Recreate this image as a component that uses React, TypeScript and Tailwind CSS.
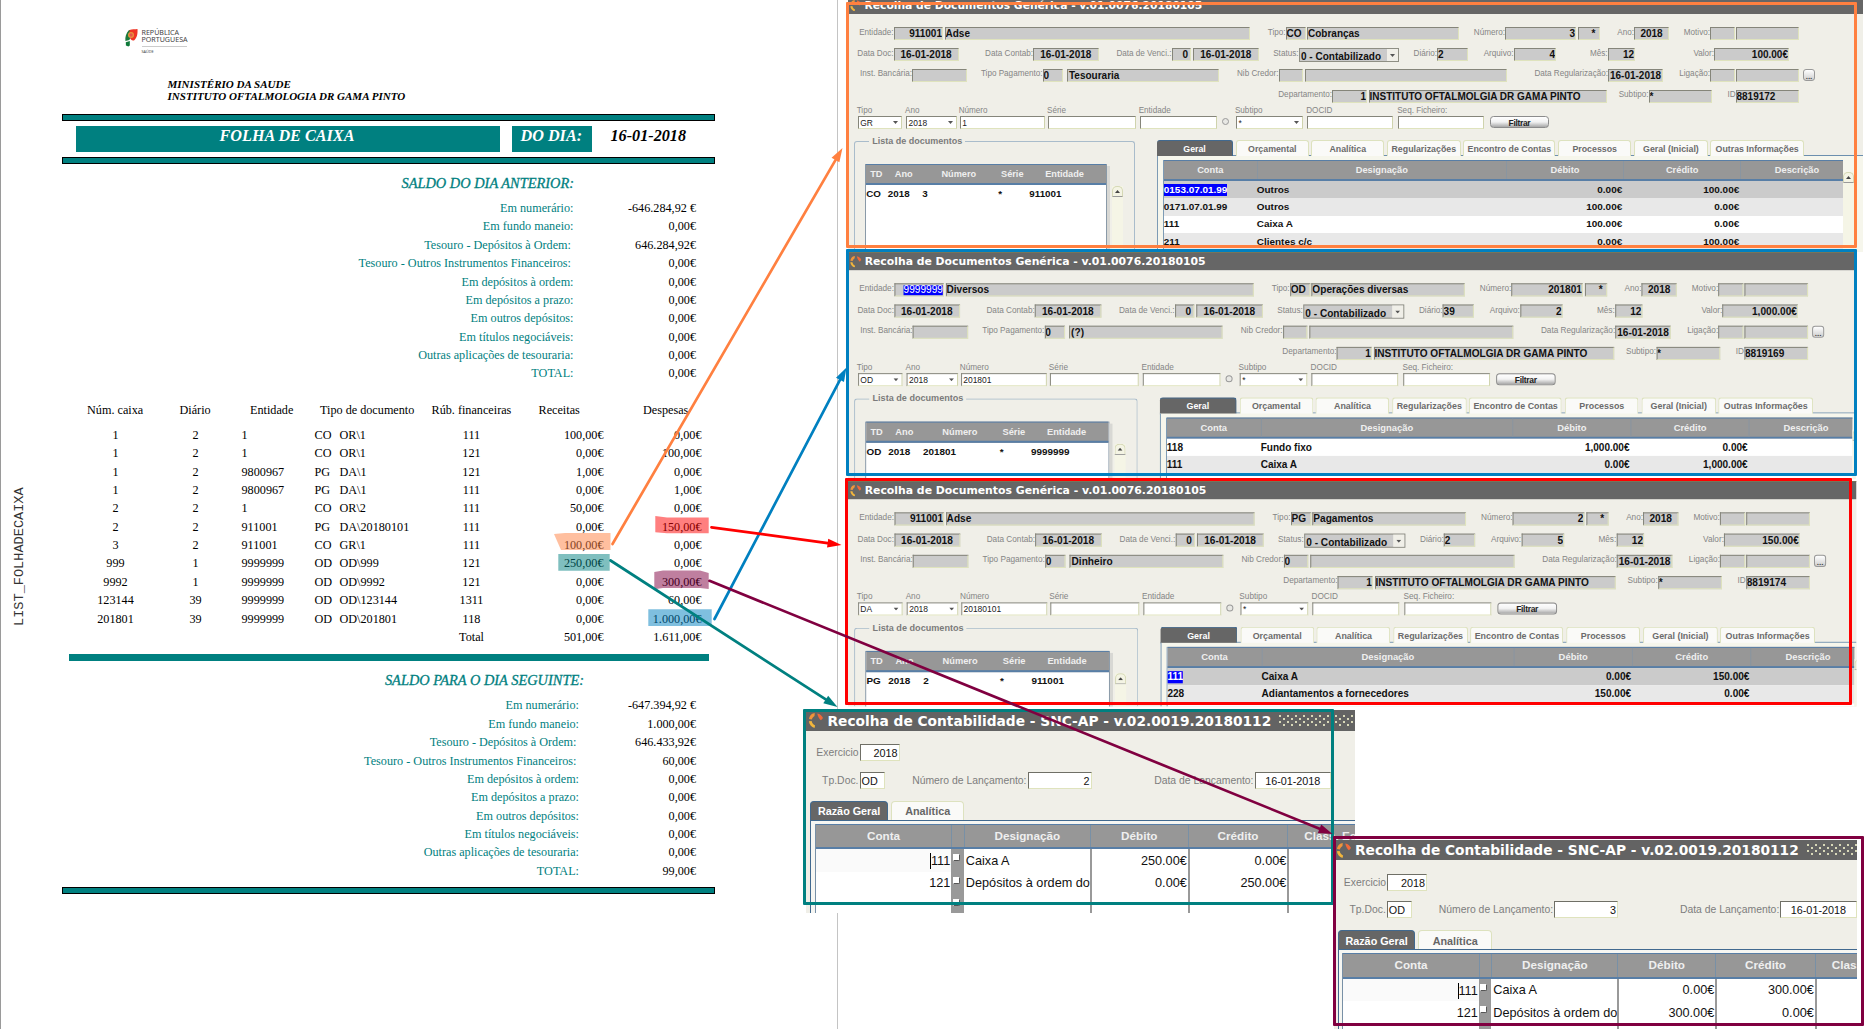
import type { ReactNode } from "react";

/* ---------- Cash sheet (left page) ---------- */

type Balance = [label: string, value: string];

const previousBalance: Balance[] = [
  ["Em numerário:", "-646.284,92 €"],
  ["Em fundo maneio:", "0,00€"],
  ["Tesouro - Depósitos à Ordem:", "646.284,92€"],
  ["Tesouro - Outros Instrumentos Financeiros:", "0,00€"],
  ["Em depósitos à ordem:", "0,00€"],
  ["Em depósitos a prazo:", "0,00€"],
  ["Em outros depósitos:", "0,00€"],
  ["Em títulos negociáveis:", "0,00€"],
  ["Outras aplicações de tesouraria:", "0,00€"],
  ["TOTAL:", "0,00€"],
];

const nextBalance: Balance[] = [
  ["Em numerário:", "-647.394,92 €"],
  ["Em fundo maneio:", "1.000,00€"],
  ["Tesouro - Depósitos à Ordem:", "646.433,92€"],
  ["Tesouro - Outros Instrumentos Financeiros:", "60,00€"],
  ["Em depósitos à ordem:", "0,00€"],
  ["Em depósitos a prazo:", "0,00€"],
  ["Em outros depósitos:", "0,00€"],
  ["Em títulos negociáveis:", "0,00€"],
  ["Outras aplicações de tesouraria:", "0,00€"],
  ["TOTAL:", "99,00€"],
];

const movements = [
  ["1", "2", "1", "CO", "OR\\1", "111", "100,00€", "0,00€"],
  ["1", "2", "1", "CO", "OR\\1", "121", "0,00€", "100,00€"],
  ["1", "2", "9800967", "PG", "DA\\1", "121", "1,00€", "0,00€"],
  ["1", "2", "9800967", "PG", "DA\\1", "111", "0,00€", "1,00€"],
  ["2", "2", "1", "CO", "OR\\2", "111", "50,00€", "0,00€"],
  ["2", "2", "911001", "PG", "DA\\20180101", "111", "0,00€", "150,00€"],
  ["3", "2", "911001", "CO", "GR\\1", "111", "100,00€", "0,00€"],
  ["999", "1", "9999999", "OD", "OD\\999", "121", "250,00€", "0,00€"],
  ["9992", "1", "9999999", "OD", "OD\\9992", "121", "0,00€", "300,00€"],
  ["123144", "39", "9999999", "OD", "OD\\123144", "1311", "0,00€", "60,00€"],
  ["201801", "39", "9999999", "OD", "OD\\201801", "118", "0,00€", "1.000,00€"],
  ["", "", "", "", "", "Total", "501,00€", "1.611,00€"],
];

function Rule() {
  return <div className="ml-[62.5px] h-[7px] w-[652.5px] shrink-0 border border-black bg-[#008080]" />;
}

function BalanceRows({ rows, labelWidth }: { rows: Balance[]; labelWidth: string }) {
  return (
    <div className="flex flex-col text-[12.2px] leading-[18.38px]">
      {rows.map(([label, value]) => (
        <div key={label} className="flex w-[696.5px] justify-between whitespace-nowrap">
          <span
            className={`${labelWidth} text-right text-[#008080] ${label.startsWith("Tesouro") ? "pr-[2.5px]" : ""}`}
          >
            {label}
          </span>
          <span>{value}</span>
        </div>
      ))}
    </div>
  );
}

function Emblem() {
  return (
    <svg className="h-[18px] w-[13px]" viewBox="0 0 13 18">
      <path d="M4 1C1 4 0 8 .4 12l4-1c0-1.500 3-3 3-5V1z" fill="#1d7a3c" />
      <path d="M4.500 1C7 .3 10 .2 12.500 0c.3 5-.5 9-3.500 11.500C7 12 5 10.500 5 8z" fill="#ee3524" />
      <circle cx="6" cy="6" r="3" fill="#e8963c" />
      <circle cx="6" cy="6" r="1.800" fill="#e4574a" />
      <path d="M.8 13.200l4-1.200v4.500l-1.500 1L.9 16.500z" fill="#0f7a3a" />
    </svg>
  );
}

const movementGrid =
  "grid grid-cols-[80px_80px_74px_25px_98px_78px_93px_98px] whitespace-nowrap";

function CashSheet() {
  return (
    <section className="flex h-[1029px] w-[838px] border-l-[1.5px] border-r border-l-[#9a9a9a] border-r-[#c4c4c4] bg-white font-['Liberation_Serif',serif] text-black">
      <div className="h-full w-0">
        <div className="ml-[10px] mt-[486px] h-[140px] w-[18px] rotate-180 whitespace-nowrap font-['Liberation_Mono',monospace] text-[13.6px] leading-[18px] text-[#333] [writing-mode:vertical-rl]">
          LIST_FOLHADECAIXA
        </div>
      </div>
      <div className="-ml-[1.5px] flex w-[836px] shrink-0 flex-col">
        <div className="ml-[125px] mt-[29px] flex h-[49px]">
          <Emblem />
          <div className="ml-1 font-['Noto_Sans',sans-serif] text-[7.1px] leading-[7px] text-[#444]">
            <div>REPÚBLICA</div>
            <div className="w-[45.5px] border-b border-[#ccc] pb-[3px]">PORTUGUESA</div>
            <div className="pt-0.5 text-[3.8px] leading-[5px]">SAÚDE</div>
          </div>
        </div>
        <div className="ml-[168px] h-[36px] text-[11.05px] font-bold italic leading-[12px]">
          <div>MINISTÉRIO DA SAUDE</div>
          <div>INSTITUTO OFTALMOLOGIA DR GAMA PINTO</div>
        </div>
        <Rule />
        <div className="mb-[5px] ml-[76px] mt-[5px] flex h-[26px] gap-3 text-[16.2px] font-bold italic leading-[20px]">
          <div className="w-[424px] bg-[#008080] pl-[144px] text-white">FOLHA DE CAIXA</div>
          <div className="w-[80px] bg-[#008080] pl-[9px] text-white">DO DIA:</div>
          <div className="pl-[7px]">16-01-2018</div>
        </div>
        <Rule />
        <h2 className="mb-[7px] mt-[10px] w-[574.5px] text-right text-[14.4px] italic leading-[18px] text-[#008080] [-webkit-text-stroke:0.3px]">
          SALDO DO DIA ANTERIOR:
        </h2>
        <BalanceRows rows={previousBalance} labelWidth="w-[574px]" />
        <div className="mt-[18px] flex h-[25px] whitespace-nowrap text-[12.2px] leading-[18px]">
          <span className="ml-[87.5px] w-[92.5px]">Núm. caixa</span>
          <span className="w-[70.5px]">Diário</span>
          <span className="w-[70px]">Entidade</span>
          <span className="w-[111.5px]">Tipo de documento</span>
          <span className="w-[107px]">Rúb. financeiras</span>
          <span className="w-[104.500px]">Receitas</span>
          <span>Despesas</span>
        </div>
        <div className="ml-[76px] flex flex-col text-[12.2px] leading-[18.39px]">
          {movements.map((m, i) => (
            <div key={i} className={movementGrid}>
              <span className="text-center">{m[0]}</span>
              <span className="text-center">{m[1]}</span>
              <span className="pl-[6px]">{m[2]}</span>
              <span className="pl-[5px]">{m[3]}</span>
              <span className="pl-[5px]">{m[4]}</span>
              <span className="text-center">{m[5]}</span>
              <span className="text-right">{m[6]}</span>
              <span className="text-right">{m[7]}</span>
            </div>
          ))}
        </div>
        <div className="ml-[69px] mt-[7.5px] h-[7px] w-[640px] shrink-0 bg-[#008080]" />
        <h2 className="mb-[7px] mt-[10.5px] w-[584.5px] text-right text-[14.4px] italic leading-[18px] text-[#008080] [-webkit-text-stroke:0.3px]">
          SALDO PARA O DIA SEGUINTE:
        </h2>
        <BalanceRows rows={nextBalance} labelWidth="w-[579.5px]" />
        <div className="h-[6.5px]" />
        <Rule />
      </div>
    </section>
  );
}

/* ---------- Application windows ---------- */

function AppIcon({ className }: { className: string }) {
  return (
    <svg className={className} viewBox="0 0 12 12">
      <path d="M5 0L3 .5C1.500 1.500.6 3 .4 4.800L2.600 5.200C3 4 3.800 3 4.800 2.400z" fill="#f0953a" />
      <path d="M7 0.300c2.200.4 3.800 1.800 4.600 3.700L10 5.800C9 5 7.600 3.500 7 .3z" fill="#ee6a3a" />
      <path d="M.3 6.500l2.200-.2C2.800 8 4 9.300 5.300 10L4.800 12C2.300 11 .6 9 .3 6.500z" fill="#f2b63c" />
    </svg>
  );
}

function Label({ children }: { children?: ReactNode }) {
  return (
    <span className="flex justify-end whitespace-nowrap pt-[0.5px] text-[8.15px] leading-[9px] text-[#858585]">
      {children}
    </span>
  );
}

function Field({ children, align = "" }: { children?: ReactNode; align?: string }) {
  return (
    <span
      className={`flex h-[12.7px] items-center overflow-hidden whitespace-nowrap border-b border-l border-r border-t border-b-[#dfe3bd] border-l-[#85857a] border-r-[#dfe3bd] border-t-[#85857a] bg-[#cbcbcb] pt-[1.5px] text-[10px] font-bold leading-[10px] text-[#111] ${align}`}
    >
      {children}
    </span>
  );
}

const right = "justify-end";
const center = "justify-center text-[9.7px]";

function Chevron() {
  return (
    <svg className="h-[3px] w-[5px]" viewBox="0 0 5 3">
      <path d="M0 0h5L2.500 3z" fill="#555" />
    </svg>
  );
}

function Input({ label, children, select }: { label: string; children?: ReactNode; select?: boolean }) {
  return (
    <div className="flex flex-col text-[8.4px] text-[#222]">
      <span className="-ml-px h-[10px] whitespace-nowrap text-[8.15px] leading-[9px] text-[#858585]">{label}</span>
      <div className="flex h-[12.5px] items-center justify-between border border-b-[#dfe3bd] border-l-[#85857a] border-r-[#cfd3ad] border-t-[#85857a] bg-white pl-[1.5px] pr-[2.5px]">
        <span className="pt-[1px] leading-[10px]">{children}</span>
        {select && <Chevron />}
      </div>
    </div>
  );
}

function ScrollArrow() {
  return (
    <div className="flex h-[11px] w-[11px] items-center justify-center rounded-t-[5px] border border-b-[#999] border-l-[#d5d8b5] border-r-[#d5d8b5] border-t-[#d5d8b5] bg-[#f4f4e4]">
      <svg className="h-[3px] w-[5px]" viewBox="0 0 5 3">
        <path d="M0 3h5L2.500 0z" fill="#444" />
      </svg>
    </div>
  );
}

function Tab({ children }: { children: ReactNode }) {
  return (
    <div className="flex items-center justify-center whitespace-nowrap rounded-t-[3px] border-l border-r border-t border-[#dde2bf] bg-[#fafaf8] pt-[2px] text-[8.8px] font-bold text-[#6b6b6b]">
      {children}
    </div>
  );
}

interface Entry {
  conta: string;
  desig: string;
  deb: string;
  cred: string;
  tone: string;
  selected?: boolean;
}

interface DocProps {
  entity: string;
  entityName: string;
  entitySelected?: boolean;
  tipo: string;
  tipoName: string;
  numero: string;
  diario: string;
  arquivo: string;
  valor: string;
  pagamento: string;
  nib?: string;
  id: string;
  filterTipo: string;
  filterNumero: string;
  list: string[];
  entries: Entry[];
}

function DocumentWindow(p: DocProps) {
  return (
    <div className="flex h-full w-full flex-col overflow-hidden bg-[#f0efe8] font-['Liberation_Sans',sans-serif]">
      <div className="flex h-[17.5px] shrink-0 items-center border-t border-[#77755a] bg-[#666] pl-[2px]">
        <AppIcon className="h-[11.5px] w-[11.5px]" />
        <span className="ml-[3px] whitespace-nowrap pt-[2px] font-['DejaVu_Sans',sans-serif] text-[10.74px] font-bold text-white">
          Recolha de Documentos Genérica - v.01.0076.20180105
        </span>
      </div>

      <div className="mt-[13.5px] grid h-[21.3px] shrink-0 grid-cols-[45.5px_49.5px_1.5px_305.5px_35.5px_20px_1.5px_152px_46px_71px_1.5px_22px_34.5px_35px_41px_24.5px_1.5px_63px]">
        <Label>Entidade:</Label>
        <Field align={right}>
          {p.entitySelected ? (
            <span className="bg-[#0000fe] text-[10px] font-normal text-white">{p.entity}</span>
          ) : (
            p.entity
          )}
        </Field>
        <i />
        <Field>{p.entityName}</Field>
        <Label>Tipo:</Label>
        <Field>{p.tipo}</Field>
        <i />
        <Field>{p.tipoName}</Field>
        <Label>Número:</Label>
        <Field align={right}>{p.numero}</Field>
        <i />
        <Field align="justify-end pr-[3px]">*</Field>
        <Label>Ano:</Label>
        <Field align={center}>2018</Field>
        <Label>Motivo:</Label>
        <Field />
        <i />
        <Field />
      </div>

      <div className="grid h-[20.7px] shrink-0 grid-cols-[45.5px_65px_74.5px_65.5px_73px_19.5px_1.5px_66.5px_39.500px_100.5px_38px_31px_45.5px_42.5px_51.5px_27.5px_79px_75px]">
        <Label>Data Doc:</Label>
        <Field align={center}>16-01-2018</Field>
        <Label>Data Contab:</Label>
        <Field align={center}>16-01-2018</Field>
        <Label>Data de Venci.:</Label>
        <Field align="justify-end pr-[2px]">0</Field>
        <i />
        <Field align={center}>16-01-2018</Field>
        <Label>Status:</Label>
        <div className="flex h-[13.5px] items-center justify-between border border-[#8f8f84] bg-[#cbcbcb] pl-[1.500px] text-[10px] font-bold text-[#111]">
          <span className="whitespace-nowrap pt-[3px] leading-[10px]">0 - Contabilizado</span>
          <span className="flex h-full w-[11px] items-center justify-center bg-[#f0efe8]">
            <Chevron />
          </span>
        </div>
        <Label>Diário:</Label>
        <Field>{p.diario}</Field>
        <Label>Arquivo:</Label>
        <Field align={right}>{p.arquivo}</Field>
        <Label>Mês:</Label>
        <Field align={right}>12</Field>
        <Label>Valor:</Label>
        <Field align={right}>{p.valor}</Field>
      </div>

      <div className="grid h-[21px] shrink-0 grid-cols-[64px_54.5px_76px_20.500px_4px_152px_59.500px_24px_2px_202px_101.5px_55px_47px_24.5px_1.5px_63px_4px_12px]">
        <Label>Inst. Bancária:</Label>
        <Field />
        <Label>Tipo Pagamento:</Label>
        <Field>0</Field>
        <i />
        <Field align="pl-[1px]">{p.pagamento}</Field>
        <Label>Nib Credor:</Label>
        <Field>{p.nib}</Field>
        <i />
        <Field />
        <Label>Data Regularização:</Label>
        <Field align={center}>16-01-2018</Field>
        <Label>Ligação:</Label>
        <Field />
        <i />
        <Field />
        <i />
        <div className="flex h-[12.5px] items-end justify-center rounded-[3px] border border-[#999] bg-gradient-to-b from-white to-[#cfcfcf] text-[8px] font-bold leading-[7px] text-[#444]">
          ...
        </div>
      </div>

      <div className="grid h-[16.5px] shrink-0 grid-cols-[484px_35px_1.5px_238px_42px_63.5px_23.500px_63.5px]">
        <Label>Departamento:</Label>
        <Field align={right}>1</Field>
        <i />
        <Field>INSTITUTO OFTALMOLGIA DR GAMA PINTO</Field>
        <Label>Subtipo:</Label>
        <Field>*</Field>
        <Label>ID</Label>
        <Field>{p.id}</Field>
      </div>

      <div className="ml-[9.7px] grid h-[34px] shrink-0 grid-cols-[44.3px_4px_51px_2.7px_85.3px_3px_87.7px_4px_77.6px_4.7px_7.4px_6.6px_67px_4.3px_85.4px_5.6px_85.4px_6.3px_59px]">
        <Input label="Tipo" select>{p.filterTipo}</Input>
        <i />
        <Input label="Ano" select>2018</Input>
        <i />
        <Input label="Número">{p.filterNumero}</Input>
        <i />
        <Input label="Série" />
        <i />
        <Input label="Entidade" />
        <i />
        <div className="mt-[11.5px] h-[7.4px] w-[7.4px] rounded-full border border-[#999] bg-[#e8e8e4]" />
        <i />
        <Input label="Subtipo" select>*</Input>
        <i />
        <Input label="DOCID" />
        <i />
        <Input label="Seq. Ficheiro:" />
        <i />
        <div className="mt-[9.5px] flex h-[12.5px] items-center justify-center rounded-[3.5px] border border-[#8c8c8c] bg-gradient-to-b from-white via-[#f2f2f2] to-[#a8a8a8] pt-[2px] text-[8.4px] font-bold leading-[9px] tracking-[-0.3px] text-[#222]">
          Filtrar
        </div>
      </div>

      <div className="flex min-h-0 grow">
        <div className="ml-[6.3px] mt-[1px] w-[281px] shrink-0 rounded-t-[3px] border border-b-0 border-[#a9bccb]">
          <div className="-mt-[6px] ml-[14px] h-[11px] w-fit bg-[#f0efe8] px-[3px] text-[9px] font-bold leading-[11px] text-[#7b7b7b]">
            Lista de documentos
          </div>
          <div className="ml-[10px] mt-[17px] flex h-full">
            <div className="flex h-full w-[241.5px] flex-col border-l border-r border-[#8a9aa8] bg-white">
              <div className="grid h-[20.5px] shrink-0 grid-cols-[20px_35px_75px_32px_1fr] items-center border-b-2 border-t border-[#587ea6] bg-[#979797] pt-[1px] text-center text-[9.2px] font-bold text-[#efefef]">
                <span>TD</span>
                <span>Ano</span>
                <span>Número</span>
                <span>Série</span>
                <span className="pr-[5px]">Entidade</span>
              </div>
              <div className="flex h-[17px] items-center pt-[1px] text-[9.8px] font-bold text-[#111]">
                <span className="w-[21.5px]">{p.list[0]}</span>
                <span className="w-[34.5px]">{p.list[1]}</span>
                <span className="w-[76px]">{p.list[2]}</span>
                <span className="w-[31px]">*</span>
                <span>{p.list[3]}</span>
              </div>
            </div>
            <div className="mt-[2px] h-full w-[3px] bg-[#d8d8d4]" />
            <div className="ml-[2px] mt-[21.5px] h-full bg-[#f5f5e6]">
              <ScrollArrow />
            </div>
          </div>
        </div>

        <div className="ml-[21.5px] flex min-w-0 grow flex-col">
          <div className="grid h-[15.500px] shrink-0 grid-cols-[76.5px_72.600px_73px_73.7px_92px_73.400px_73.700px_93.300px] gap-x-[2.7px] border-b border-[#6c8fae]">
            <div className="flex items-center justify-center rounded-t-[3px] border-t border-r border-[#41698f] bg-[#666] pt-[2px] text-[8.8px] font-bold text-white">
              Geral
            </div>
            <Tab>Orçamental</Tab>
            <Tab>Analítica</Tab>
            <Tab>Regularizações</Tab>
            <Tab>Encontro de Contas</Tab>
            <Tab>Processos</Tab>
            <Tab>Geral (Inicial)</Tab>
            <Tab>Outras Informações</Tab>
          </div>
          <div className="flex min-h-0 grow border-l border-[#7d9bb5] bg-[#f6f6ec] pl-[5px] pt-[4.5px]">
            <div className="flex w-[680px] shrink-0 flex-col border-l border-[#7d9bb5] bg-white">
              <div className="grid h-[20.5px] shrink-0 grid-cols-[93px_249px_117.4px_117px_1fr] items-center border-b-2 border-t border-[#587ea6] bg-[#979797] text-center text-[9.3px] font-bold text-[#efefef]">
                <span className="pt-[1px]">Conta</span>
                <span className="flex h-full items-center justify-center border-l border-[#8a95a0] pt-[1px]">Designação</span>
                <span className="flex h-full items-center justify-center border-l border-[#8a95a0] pt-[1px]">Débito</span>
                <span className="flex h-full items-center justify-center border-l border-[#8a95a0] pt-[1px]">Crédito</span>
                <span className="flex h-full items-center justify-center border-l border-[#8a95a0] pl-[10px] pt-[1px]">Descrição</span>
              </div>
              {p.entries.map((e) => (
                <div
                  key={e.conta}
                  className={`grid h-[17.3px] shrink-0 grid-cols-[93px_249px_116.4px_117px] items-center whitespace-nowrap pt-[0.5px] text-[9.95px] font-bold leading-[12px] text-[#111] ${e.tone}`}
                >
                  <span>
                    {e.selected ? (
                      <span className="inline-block bg-[#0000fe] text-white">{e.conta}</span>
                    ) : (
                      e.conta
                    )}
                  </span>
                  <span>{e.desig}</span>
                  <span className="text-right">{e.deb}</span>
                  <span className="text-right">{e.cred}</span>
                </div>
              ))}
            </div>
            <div className="mt-[12px] bg-[#f5f5e6]">
              <ScrollArrow />
            </div>
          </div>
        </div>
      </div>
    </div>
  );
}

function WhiteBox({ children, className }: { children: ReactNode; className: string }) {
  return (
    <span
      className={`flex h-[17px] items-center whitespace-nowrap border border-b-[#dfe3bd] border-l-[#6f6f66] border-r-[#dfe3bd] border-t-[#6f6f66] bg-white px-px pt-[1px] text-[10.8px] text-[#111] ${className}`}
    >
      {children}
    </span>
  );
}

const ledgerCols = "grid grid-cols-[135.5px_12.500px_126px_98px_99.500px_1fr]";
const headCell = "flex h-full items-center justify-center border-l border-[#7890a6]";

function LedgerWindow({ numero, rows }: { numero: string; rows: string[][] }) {
  return (
    <div className="flex h-full w-full flex-col overflow-hidden bg-[#f0efe8] font-['Liberation_Sans',sans-serif]">
      <div className="flex h-[20.5px] shrink-0 items-center bg-[#636363] pl-[2px] pt-[1px]">
        <AppIcon className="h-[15px] w-[16px]" />
        <span className="ml-[3.5px] shrink-0 whitespace-nowrap pt-[1px] font-['DejaVu_Sans',sans-serif] text-[13.76px] font-bold text-white">
          Recolha de Contabilidade - SNC-AP - v.02.0019.20180112
        </span>
        <span className="ml-[8px] h-[12px] grow bg-[radial-gradient(circle_at_1px_1px,#d8d8b8_0.8px,transparent_1px),radial-gradient(circle_at_1px_1px,#d8d8b8_0.8px,transparent_1px)] bg-[length:8px_6px] [background-position:0_0,4px_3px]" />
      </div>
      <div className="mt-[13.5px] flex h-[27.500px] shrink-0 text-[10.4px] leading-[18px] text-[#7d7d7d]">
        <span className="w-[53.5px] pr-px text-right">Exercicio</span>
        <WhiteBox className="w-[40px] justify-end">2018</WhiteBox>
      </div>
      <div className="flex h-[29px] shrink-0 whitespace-nowrap text-[10.4px] leading-[18px] text-[#7d7d7d]">
        <span className="w-[53.5px] pr-px text-right">Tp.Doc.</span>
        <WhiteBox className="w-[25.5px]">OD</WhiteBox>
        <span className="w-[142.5px] pr-px text-right">Número de Lançamento:</span>
        <WhiteBox className="w-[64px] justify-end">{numero}</WhiteBox>
        <span className="w-[163px] pr-px text-right">Data de Lançamento:</span>
        <WhiteBox className="w-[76.500px] justify-center">16-01-2018</WhiteBox>
      </div>
      <div className="ml-[4.300px] flex h-[20px] shrink-0 gap-[3px] border-b border-[#41698f] text-[10.8px] font-bold">
        <div className="flex w-[77.700px] items-center justify-center rounded-t-[4px] border-l border-r border-t border-[#41698f] bg-[#666] pt-[2px] text-white">
          Razão Geral
        </div>
        <div className="flex w-[73.500px] items-center justify-center rounded-t-[4px] border-l border-r border-t border-[#dde2bf] bg-[#fafaf8] pt-[2px] text-[#666]">
          Analítica
        </div>
      </div>
      <div className="ml-[4.300px] flex min-h-0 grow border-l border-[#41698f] bg-[#f6f6f2] pl-[3.500px] pt-[3px]">
        <div className="flex w-full flex-col border-l border-[#7890a6] bg-white">
          <div
            className={`${ledgerCols} h-[25.500px] shrink-0 items-center border-b-2 border-t border-[#587ea6] bg-[#979797] text-[11.7px] font-bold text-[#efefef]`}
          >
            <span className="text-center">Conta</span>
            <span className={headCell} />
            <span className={headCell}>Designação</span>
            <span className={headCell}>Débito</span>
            <span className={headCell}>Crédito</span>
            <span className="flex h-full items-center whitespace-nowrap border-l border-[#7890a6] pl-[16px]">
              Class. Ec
            </span>
          </div>
          {[...rows, ["", "", "", ""]].map((r, i) => (
            <div
              key={i}
              className={`${ledgerCols} h-[22.500px] shrink-0 items-center whitespace-nowrap text-[12.7px] text-[#111]`}
            >
              <span
                className={`flex h-full items-center justify-end pr-[1px] pt-[2px] ${i === 0 ? "bg-[#fafafa]" : ""}`}
              >
                <span className={i === 0 ? "border-l border-black leading-[16px]" : ""}>{r[0]}</span>
              </span>
              <span className="h-full bg-[#999] pl-[1.500px] pt-[5px]">
                <span className="block h-[7px] w-[7px] rounded-br-[2px] border border-b-[#555] border-l-white border-r-[#555] border-t-white bg-white" />
              </span>
              <span className="flex h-full items-center overflow-hidden pl-[2px] pt-[2px]">{r[1]}</span>
              <span className="flex h-full items-center justify-end border-l-2 border-[#999] pr-[1px] pt-[2px]">{r[2]}</span>
              <span className="flex h-full items-center justify-end border-l-2 border-[#999] pr-[1px] pt-[2px]">{r[3]}</span>
              <span className="h-full border-l-2 border-[#999]" />
            </div>
          ))}
        </div>
      </div>
    </div>
  );
}

/* ---------- Annotations ---------- */

interface ArrowProps {
  from: [number, number];
  to: [number, number];
  color: string;
}

function Arrow({ from, to, color }: ArrowProps) {
  const dx = to[0] - from[0];
  const dy = to[1] - from[1];
  const len = Math.hypot(dx, dy);
  const ux = dx / len;
  const uy = dy / len;
  const bx = to[0] - ux * 14;
  const by = to[1] - uy * 14;
  return (
    <g fill={color} stroke={color}>
      <line x1={from[0]} y1={from[1]} x2={bx} y2={by} strokeWidth={2.7} strokeLinecap="round" />
      <polygon
        stroke="none"
        points={`${to[0]},${to[1]} ${bx - uy * 4.500},${by + ux * 4.500} ${bx + uy * 4.500},${by - ux * 4.500}`}
      />
    </g>
  );
}

const gray = "bg-[#cbcbcb]";
const light = "bg-[#e8e8e8]";

export default function App() {
  return (
    <main className="relative h-[1029px] w-[1867px] overflow-hidden bg-white">
      <CashSheet />

      <div className="absolute left-[848px] top-[-4px] h-[255.500px] w-[1015px]">
        <DocumentWindow
          entity="911001"
          entityName="Adse"
          tipo="CO"
          tipoName="Cobranças"
          numero="3"
          diario="2"
          arquivo="4"
          valor="100.00€"
          pagamento="Tesouraria"
          id="8819172"
          filterTipo="GR"
          filterNumero="1"
          list={["CO", "2018", "3", "911001"]}
          entries={[
            { conta: "0153.07.01.99", desig: "Outros", deb: "0.00€", cred: "100.00€", tone: gray, selected: true },
            { conta: "0171.07.01.99", desig: "Outros", deb: "100.00€", cred: "0.00€", tone: light },
            { conta: "111", desig: "Caixa A", deb: "100.00€", cred: "0.00€", tone: "bg-white" },
            { conta: "211", desig: "Clientes c/c", deb: "0.00€", cred: "100.00€", tone: light },
          ]}
        />
      </div>

      <div className="absolute left-[848px] top-[251.500px] h-[224.500px] w-[998px] origin-top-left scale-[1.0095]">
        <DocumentWindow
          entity="9999999"
          entityName="Diversos"
          entitySelected
          tipo="OD"
          tipoName="Operações diversas"
          numero="201801"
          diario="39"
          arquivo="2"
          valor="1,000.00€"
          pagamento="(?)"
          id="8819169"
          filterTipo="OD"
          filterNumero="201801"
          list={["OD", "2018", "201801", "9999999"]}
          entries={[
            { conta: "118", desig: "Fundo fixo", deb: "1,000.00€", cred: "0.00€", tone: "bg-white" },
            { conta: "111", desig: "Caixa A", deb: "0.00€", cred: "1,000.00€", tone: light },
          ]}
        />
      </div>

      <div className="absolute left-[848px] top-[480.500px] h-[223px] w-[996.500px] origin-top-left scale-[1.0115]">
        <DocumentWindow
          entity="911001"
          entityName="Adse"
          tipo="PG"
          tipoName="Pagamentos"
          numero="2"
          diario="2"
          arquivo="5"
          valor="150.00€"
          pagamento="Dinheiro"
          nib="0"
          id="8819174"
          filterTipo="DA"
          filterNumero="20180101"
          list={["PG", "2018", "2", "911001"]}
          entries={[
            { conta: "111", desig: "Caixa A", deb: "0.00€", cred: "150.00€", tone: gray, selected: true },
            { conta: "228", desig: "Adiantamentos a fornecedores", deb: "150.00€", cred: "0.00€", tone: light },
          ]}
        />
      </div>

      <div className="absolute left-[806px] top-[710px] h-[203px] w-[549px]">
        <LedgerWindow
          numero="2"
          rows={[
            ["111", "Caixa A", "250.00€", "0.00€"],
            ["121", "Depósitos à ordem do", "0.00€", "250.00€"],
          ]}
        />
      </div>

      <div className="absolute left-[1333.500px] top-[839.500px] h-[190px] w-[523px]">
        <LedgerWindow
          numero="3"
          rows={[
            ["111", "Caixa A", "0.00€", "300.00€"],
            ["121", "Depósitos à ordem do", "300.00€", "0.00€"],
          ]}
        />
      </div>

      <div className="absolute left-[846px] top-[2px] h-[246px] w-[1011px] rounded-[1px] border-[3px] border-[#ff8040]" />
      <div className="absolute left-[846px] top-[249px] h-[227px] w-[1011px] rounded-[1px] border-[3px] border-[#0080c0]" />
      <div className="absolute left-[845px] top-[478px] h-[227px] w-[1007px] rounded-[1px] border-[3px] border-[#ff0000]" />
      <div className="absolute left-[803px] top-[709px] h-[196px] w-[531px] rounded-[1px] border-[3px] border-[#008080]" />
      <div className="absolute left-[1333px] top-[836px] h-[190px] w-[531px] rounded-[1px] border-[3px] border-[#800040]" />

      <svg className="absolute left-0 top-0 h-[1029px] w-[1867px]" viewBox="0 0 1867 1029">
        <g fillOpacity={0.5}>
          <polygon fill="#ff8040" points="554,534 565,533 610.5,533 610.5,550 561,550" />
          <polygon fill="#ff0000" points="655.3,516 667,517.5 708.7,517.5 708.7,533.3 667,533.3 655.3,532.3" />
          <polygon fill="#008080" points="558.3,554 609.7,554 609.7,570.7 558.3,570.7" />
          <polygon
            fill="#800040"
            points="654.3,572 663,570.5 700,570.5 708.7,573 708.7,589 700,588 663,588 654.3,589.3"
          />
          <polygon fill="#0080c0" points="648.3,609.3 711.7,609.3 711.7,626 648.3,626" />
        </g>
        <Arrow from={[612.5, 544]} to={[842.5, 148]} color="#ff8040" />
        <Arrow from={[714.5, 619]} to={[846.5, 367.500]} color="#0080c0" />
        <Arrow from={[711.5, 527.3]} to={[841.5, 545]} color="#ff0000" />
        <Arrow from={[610.5, 560.5]} to={[837.5, 707]} color="#008080" />
        <Arrow from={[709.5, 580.8]} to={[1332.500, 834]} color="#800040" />
      </svg>
    </main>
  );
}
